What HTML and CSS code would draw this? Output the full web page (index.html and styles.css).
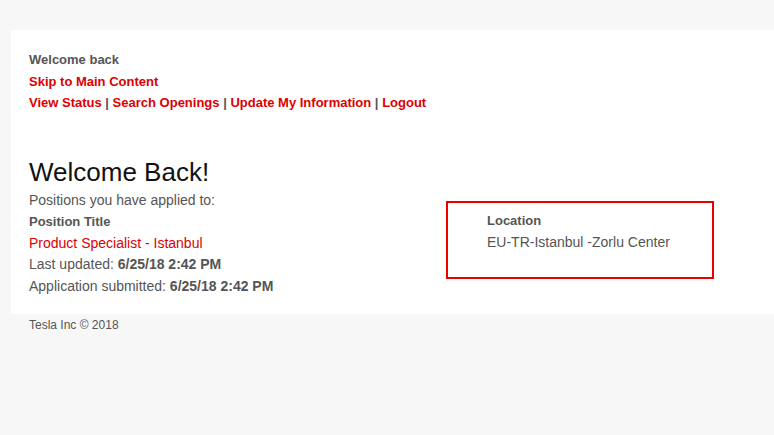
FILE: index.html
```html
<!DOCTYPE html>
<html lang="en">
<head>
  <meta charset="UTF-8" />
  <meta name="viewport" content="width=device-width, initial-scale=1.0"/>
  <title>Welcome Back</title>
  <link rel="stylesheet" href="styles.css">
</head>
<body>
  <div class="page">
    <div class="top-nav">
      <div class="greeting">Welcome back</div>
      <div><a href="#main" class="nav-link">Skip to Main Content</a></div>
      <div class="links">
        <a href="#" class="nav-link">View Status</a> |
        <a href="#" class="nav-link">Search Openings</a> |
        <a href="#" class="nav-link">Update My Information</a> |
        <a href="#" class="nav-link">Logout</a>
      </div>
    </div>

    <div id="main" class="main-content">
      <h1>Welcome Back!</h1>
      <div class="applied-label">Positions you have applied to:</div>
      <div class="applications">
        <div class="position-col">
          <div class="col-title">Position Title</div>
          <div><a href="#" class="job-link">Product Specialist - Istanbul</a></div>
          <div>Last updated: <b>6/25/18 2:42 PM</b></div>
          <div>Application submitted: <b>6/25/18 2:42 PM</b></div>
        </div>
        <div class="location-box">
          <div class="col-title">Location</div>
          <div>EU-TR-Istanbul -Zorlu Center</div>
        </div>
      </div>
    </div>
  </div>

  <div class="footer">Tesla Inc &copy; 2018</div>
</body>
</html>
```

FILE: styles.css
```css
body {
  font-family: 'Liberation Sans', Arial, Helvetica, sans-serif;
  background-color: #f7f7f7;
  color: #555;
  margin: 0;
  padding: 0;
  font-size: 14px;
  line-height: 21.5px;
}

.page {
  background-color: #fff;
  margin: 30px 0 0 11px;
  padding: 19px 18px 17px 18px;
}

.top-nav {
  font-weight: bold;
  font-size: 13px;
}

.nav-link {
  color: #dd0000;
  text-decoration: none;
}

.main-content {
  margin-top: 43px;
}

.main-content h1 {
  font-size: 26px;
  font-weight: normal;
  color: #111;
  line-height: 30px;
  margin: 0 0 3px 0;
}

.applications {
  display: flex;
  align-items: flex-start;
}

.position-col {
  width: 417px;
}

.col-title {
  font-weight: bold;
  font-size: 13px;
}

.job-link {
  color: #dd0000;
  text-decoration: none;
}

.location-box {
  width: 186px;
  margin-top: -10px;
  padding: 7px 39px 24px 39px;
  border: 2px solid #ee0000;
}

.footer {
  padding: 2px 29px;
  font-size: 12px;
  line-height: 18px;
}
```
